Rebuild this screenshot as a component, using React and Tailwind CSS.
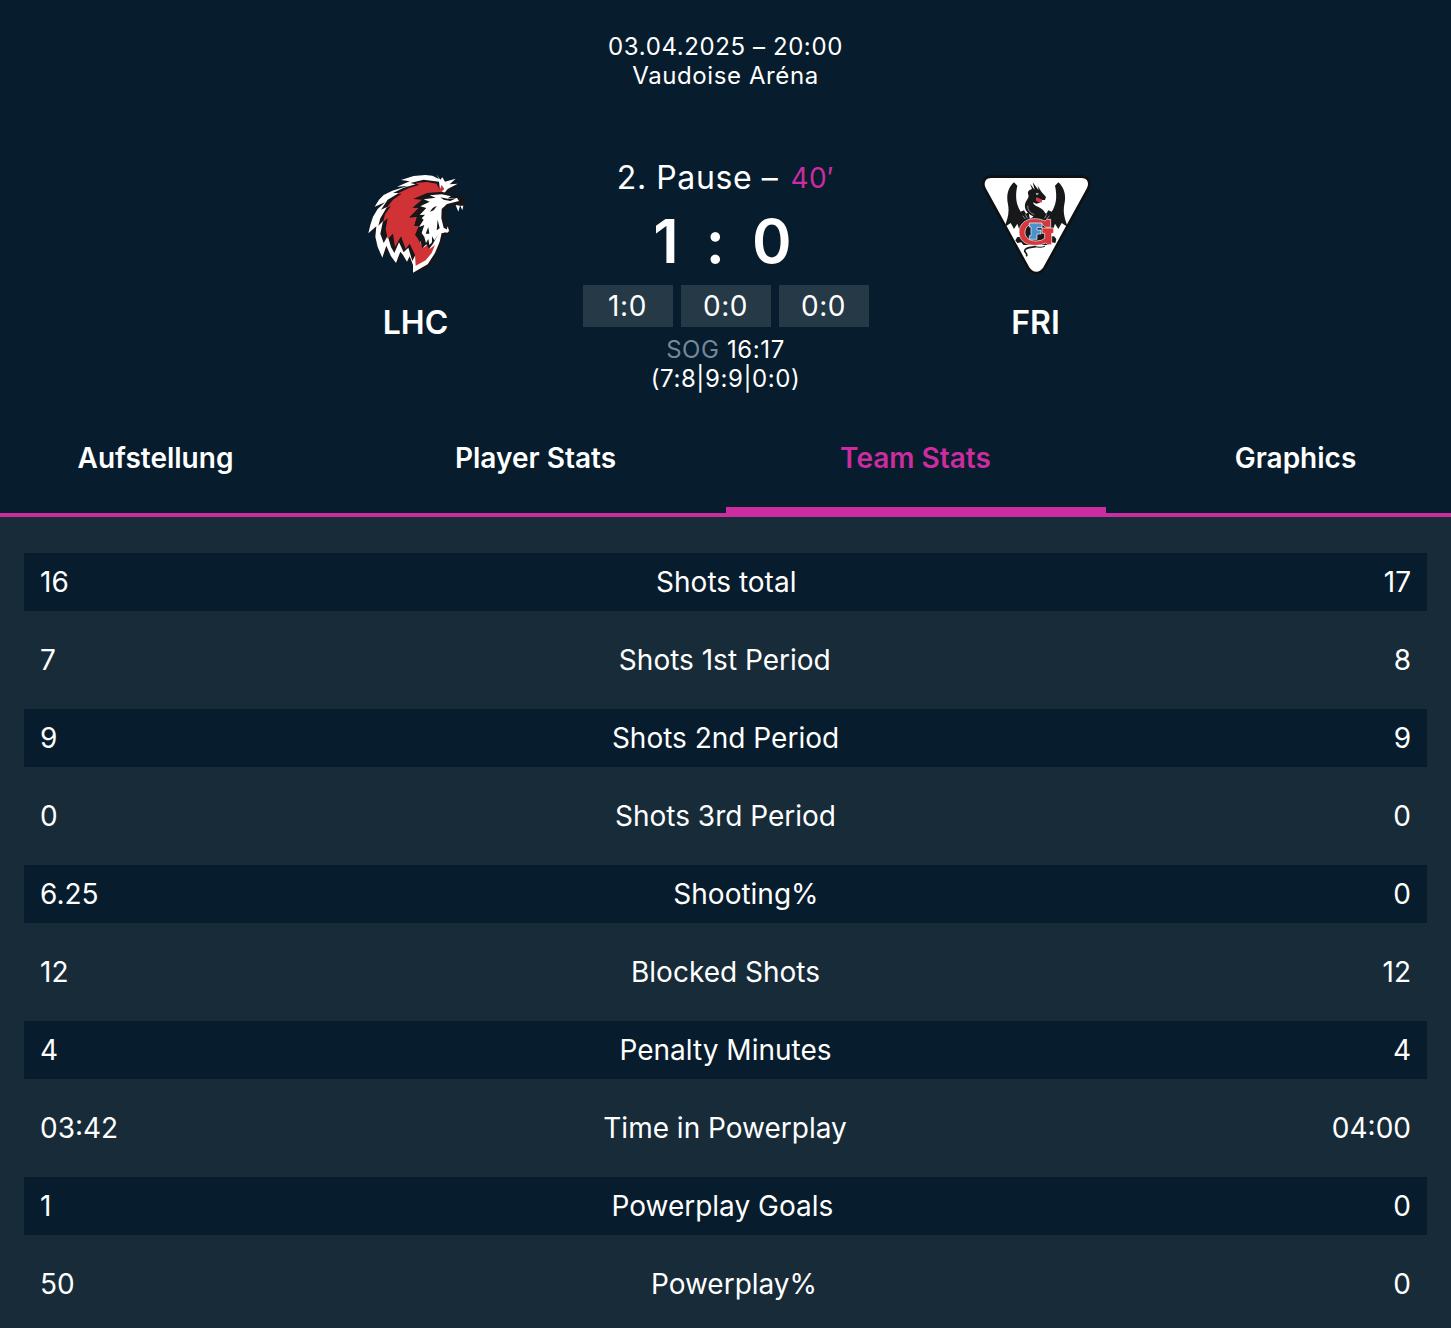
const PERIODS = ['1:0', '0:0', '0:0'];

const TABS = ['Aufstellung', 'Player Stats', 'Team Stats', 'Graphics'];

const STATS = [
  { label: 'Shots total', home: '16', away: '17' },
  { label: 'Shots 1st Period', home: '7', away: '8' },
  { label: 'Shots 2nd Period', home: '9', away: '9' },
  { label: 'Shots 3rd Period', home: '0', away: '0' },
  { label: 'Shooting%', home: '6.25', away: '0' },
  { label: 'Blocked Shots', home: '12', away: '12' },
  { label: 'Penalty Minutes', home: '4', away: '4' },
  { label: 'Time in Powerplay', home: '03:42', away: '04:00' },
  { label: 'Powerplay Goals', home: '1', away: '0' },
  { label: 'Powerplay%', home: '50', away: '0' },
];

const MANE =
  'M228 28L240 44L246 37L254 50L286 41L268 58L292 56L262 72L250 86L292 96L296 108L262 118L248 132L247 160L254 188L266 196L262 204L244 204L238 230L224 264L202 298L158 323L158 300L148 274L140 290L128 270L120 260L107 294L92 274L78 242L66 278L52 246L45 215L48 184L24 205L30 180L38 155L52 132L74 112L43 125L56 104L70 90L96 77L120 70L142 63L110 65L148 49L122 45L160 33L195 30L216 32L236 42Z';

function LionLogo() {
  return (
    <svg viewBox="2 0 330 345" className="w-[110px] h-[115px]" aria-hidden="true">
      <path d={MANE} fill="#17171a" transform="translate(6 5)" />
      <path d={MANE} fill="#fff" />
      {/* mane shade */}
      <path
        fill="#17171a"
        d="M236 50L190 44L150 54L166 58L130 68L98 84L116 84L82 104L62 134L80 126L60 160L54 182L68 168L60 206L70 234L82 212L92 246L102 264L116 232L130 262L144 248L156 288L180 240L180 110L240 84Z"
      />
      {/* mane */}
      <path
        fill="#d13236"
        d="M229 56L238 74L244 60L252 72L240 84L200 86L160 102L186 104L158 128L176 128L148 156L170 156L162 182L176 184L166 208L178 232L190 248L200 240L208 252L224 240L214 264L196 286L166 302L164 270L148 236L136 252L122 214L104 246L98 206L82 222L76 192L82 160L68 172L74 148L92 122L78 130L98 104L124 86L110 86L146 69L176 60L166 54L200 51Z"
      />
      {/* face shade */}
      <path
        fill="#17171a"
        d="M245 80L200 84L160 101L186 103L157 128L176 128L147 158L170 155L162 182L176 183L164 210L180 228L186 250L198 238L206 252L218 236L240 196L258 206L274 202L270 182L258 178L254 150L264 126L290 122L314 124L314 96L286 92Z"
      />
      {/* face */}
      <path
        fill="#fff"
        d="M244 88L208 91L226 98L190 103L208 110L180 124L198 129L178 150L194 149L184 160L190 164L176 186L192 180L184 204L192 216L197 234L204 222L207 240L215 232L215 214L222 226L240 200L262 203L264 196L250 188L243 160L244 132L260 117L296 108L290 99L262 100L272 94Z"
      />
      <path fill="#17171a" d="M240 97L262 101L288 100L270 108L250 104ZM208 140L218 128L230 122L220 136ZM196 206L204 186L207 206ZM229 196L232 164L238 190Z" />
      {/* teeth */}
      <path fill="#fff" d="M286 120L294 140L299 122ZM300 122L306 136L309 122ZM258 198L262 184L267 200Z" />
    </svg>
  );
}

const WING =
  'M116 52C98 68 92 92 98 118C103 146 96 164 87 187L106 174L116 192L126 176L134 200L150 178L164 164L160 142L152 146L146 136L136 140C124 122 118 98 126 62Z';

function DragonLogo() {
  return (
    <svg viewBox="2 0 360 345" className="w-[120px] h-[115px]" aria-hidden="true">
      <path
        fill="#fff"
        stroke="#0e1114"
        strokeWidth="8"
        strokeLinejoin="round"
        d="M48 35h270q16 0 22 12 5 12-2 25L208 308q-10 16-25 16t-25-16L28 72q-7-13-2-25 6-12 22-12z"
      />
      {/* wings */}
      <path d={WING} fill="#17181a" />
      <path d={WING} fill="#17181a" transform="translate(365 0) scale(-1 1)" />
      {/* neck and head */}
      <path
        fill="#17181a"
        d="M164 56L178 74L172 52L190 76L187 62L198 80L212 96L209 105L200 105L184 98L183 106L195 113L182 116L174 112C172 120 186 124 196 130C212 140 216 156 206 172L160 172C156 160 172 160 174 154C160 148 146 136 149 118C152 104 164 98 158 86C156 78 164 74 170 72Z"
      />
      <path fill="#d9363b" d="M184 97L201 105L198 113L182 107Z" />
      <path fill="#fff" d="M182 84L191 86L184 90Z" />
      <g fill="none" stroke="#c4c6c9" strokeWidth="2">
        <path d="M157 122q0 20 20 27M142 152l8 10M150 148l6 12M222 152l-8 10M214 148l-6 12" />
      </g>
      {/* claws and tail */}
      <path
        fill="#17181a"
        d="M126 216L120 226L126 234L138 232L144 240L220 240L228 232L240 234L243 222L236 214Z"
      />
      <path fill="none" stroke="#17181a" strokeWidth="5" strokeLinecap="round" d="M180 245C164 248 148 248 148 258C149 264 156 264 154 272" />
      <path fill="none" stroke="#17181a" strokeWidth="3" strokeLinecap="round" d="M176 244q20 6 32 0" />
      {/* emblem */}
      <ellipse cx="181" cy="202" rx="44" ry="36" fill="#17181a" />
      <path
        fill="#d9363b"
        stroke="#fff"
        strokeWidth="2"
        d="M214 163H226V187H212Q202 175 182 175C162 175 149 186 149 202C149 218 162 228 182 228Q200 228 208 220V205H200V189H235V205H229V239H217L211 234C170 252 131 234 131 202C131 168 170 150 209 168Z"
      />
      <path fill="#4b91cf" stroke="#fff" strokeWidth="2" d="M162 174H200V188H185V195H197V207H185V223H162V212H167V186H162Z" />
    </svg>
  );
}

function Team({ name, children }) {
  return (
    <div className="w-[310px] flex flex-col items-center pt-1.5">
      {children}
      <span className="mt-6 text-[32px] leading-[38px] font-semibold">{name}</span>
    </div>
  );
}

export default function App() {
  return (
    <div className="min-h-screen bg-[#172b39] text-white font-['Inter',sans-serif] overflow-hidden">
      <header className="bg-[#071c2c] pt-8">
        <div className="text-center text-2xl leading-[29px] tracking-wide">
          <p>03.04.2025 – 20:00</p>
          <p>Vaudoise Aréna</p>
        </div>

        {/* Scoreboard */}
        <div className="mt-[69px] flex justify-center">
          <Team name="LHC">
            <LionLogo />
          </Team>

          <div className="w-[310px] flex flex-col items-center text-2xl leading-[29px] tracking-wide">
            <p className="flex items-center gap-3 text-[32px] leading-[38px]">
              2. Pause – <span className="text-[28px] text-[#cb2c9f]">40′</span>
            </p>
            <p className="text-[60px] leading-[88px] font-semibold tracking-[6px]">1 : 0</p>
            <div className="flex gap-2">
              {PERIODS.map((score, i) => (
                <span key={i} className="w-[90px] bg-[#253947] text-center text-[28px] leading-[42px]">
                  {score}
                </span>
              ))}
            </div>
            <p className="mt-2"><span className="text-[#74899a]">SOG</span> 16:17</p>
            <p>(7:8|9:9|0:0)</p>
          </div>

          <Team name="FRI">
            <DragonLogo />
          </Team>
        </div>

        {/* Tabs */}
        <nav className="mt-6 flex justify-center">
          {TABS.map((tab) => (
            <button
              key={tab}
              type="button"
              className={`flex flex-1 justify-center min-w-[380px] h-[100px] pt-6 text-[28px] leading-[34px] font-semibold border-[#cb2c9f] ${
                tab === 'Team Stats' ? 'border-b-[10px] text-[#cb2c9f]' : 'border-b-4'
              }`}
            >
              {tab}
            </button>
          ))}
        </nav>
      </header>

      <main className="px-6 pt-9">
        <table className="block w-full text-[28px] leading-[34px]">
          <tbody className="flex flex-col gap-5">
            {STATS.map(({ label, home, away }) => (
              <tr key={label} className="flex justify-between px-4 py-3 odd:bg-[#071c2c]">
                <td>{home}</td>
                <th scope="row" className="font-normal">{label}</th>
                <td>{away}</td>
              </tr>
            ))}
          </tbody>
        </table>
      </main>
    </div>
  );
}
